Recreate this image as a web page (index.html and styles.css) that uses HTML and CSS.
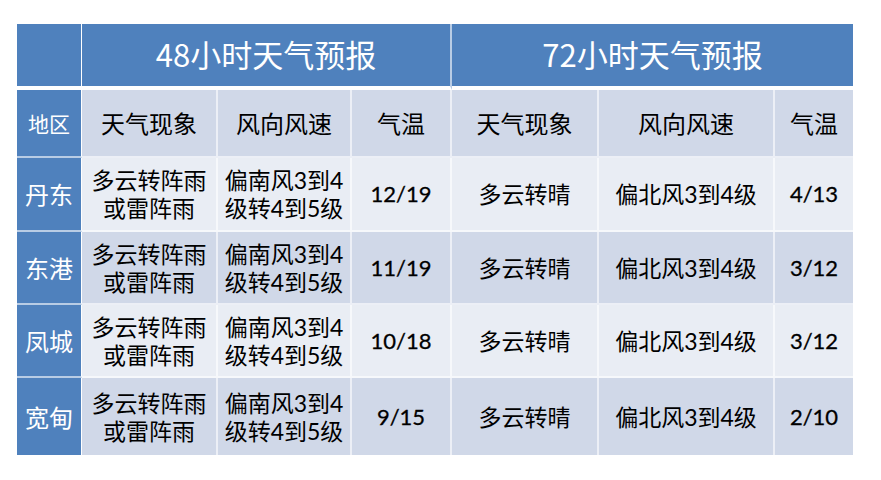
FILE: index.html
```html
<!DOCTYPE html>
<html lang="zh-CN">
<head>
<meta charset="utf-8">
<title>天气预报</title>
<link rel="stylesheet" href="styles.css">
</head>
<body>
<div class="page">
  <table class="forecast">
    <colgroup>
      <col class="c1"><col class="c2"><col class="c3"><col class="c4"><col class="c5"><col class="c6"><col class="c7">
    </colgroup>
    <thead>
      <tr class="top">
        <th class="corner"></th>
        <th class="span" colspan="3">48小时天气预报</th>
        <th class="span last" colspan="3">72小时天气预报</th>
      </tr>
      <tr class="sub">
        <th class="area">地区</th>
        <th>天气现象</th>
        <th>风向风速</th>
        <th>气温</th>
        <th>天气现象</th>
        <th>风向风速</th>
        <th class="last">气温</th>
      </tr>
    </thead>
    <tbody>
      <tr class="light">
        <th class="area">丹东</th>
        <td>多云转阵雨<br>或雷阵雨</td>
        <td>偏南风3到4<br>级转4到5级</td>
        <td class="num">12/19</td>
        <td>多云转晴</td>
        <td>偏北风3到4级</td>
        <td class="num last">4/13</td>
      </tr>
      <tr class="dark">
        <th class="area">东港</th>
        <td>多云转阵雨<br>或雷阵雨</td>
        <td>偏南风3到4<br>级转4到5级</td>
        <td class="num">11/19</td>
        <td>多云转晴</td>
        <td>偏北风3到4级</td>
        <td class="num last">3/12</td>
      </tr>
      <tr class="light">
        <th class="area">凤城</th>
        <td>多云转阵雨<br>或雷阵雨</td>
        <td>偏南风3到4<br>级转4到5级</td>
        <td class="num">10/18</td>
        <td>多云转晴</td>
        <td>偏北风3到4级</td>
        <td class="num last">3/12</td>
      </tr>
      <tr class="dark bottom">
        <th class="area">宽甸</th>
        <td>多云转阵雨<br>或雷阵雨</td>
        <td>偏南风3到4<br>级转4到5级</td>
        <td class="num">9/15</td>
        <td>多云转晴</td>
        <td>偏北风3到4级</td>
        <td class="num last">2/10</td>
      </tr>
    </tbody>
  </table>
</div>
</body>
</html>
```
FILE: styles.css
```css
html, body {
  margin: 0;
  padding: 0;
  background: #ffffff;
}

.page {
  padding: 24px 0 0 17px;
}

.forecast {
  border-collapse: separate;
  border-spacing: 0;
  table-layout: fixed;
  width: 836px;
  font-family: Lato, "Noto Sans CJK SC", sans-serif;
  color: #000000;
}

.c1 { width: 65px; }
.c2 { width: 136px; }
.c3 { width: 134px; }
.c4 { width: 100px; }
.c5 { width: 147px; }
.c6 { width: 176px; }
.c7 { width: 78px; }

.forecast th,
.forecast td {
  box-sizing: border-box;
  padding: 0;
  text-align: center;
  vertical-align: middle;
  font-weight: normal;
  border-right: 2px solid rgba(255, 255, 255, 0.6);
  border-bottom: 2px solid rgba(255, 255, 255, 0.6);
}

.forecast .last {
  border-right: none;
}

.forecast .bottom th,
.forecast .bottom td {
  border-bottom: none;
}

/* top header row */
.top th {
  background: #4f81bd;
  color: #ffffff;
  height: 66px;
  font-family: "Noto Sans CJK SC", sans-serif;
  font-size: 31px;
  line-height: 34px;
  border-bottom: 4px solid #ffffff;
  padding-bottom: 2px;
}

.forecast .top .corner,
.forecast .area {
  border-right: 1px solid #ffffff;
}

/* sub header */
.sub th {
  background: #d0d8e8;
  height: 68px;
  font-family: "Noto Sans CJK SC", sans-serif;
  font-size: 24px;
  line-height: 30px;
}

.forecast .area {
  background: #4f81bd;
  color: #ffffff;
  font-family: "Noto Sans CJK SC", sans-serif;
  font-size: 24px;
  line-height: 30px;
}

.sub .area {
  font-size: 21px;
}

tbody td {
  font-size: 23px;
  line-height: 28px;
}

tbody td.num {
  font-size: 22px;
  color: #000000;
  -webkit-text-stroke: 0.3px #000000;
}

.light td { background: #e9edf4; }
.dark td { background: #d0d8e8; }

tbody tr:nth-child(1) > * { height: 74px; }
tbody tr:nth-child(2) > * { height: 73px; }
tbody tr:nth-child(3) > * { height: 73px; }
tbody tr:nth-child(4) > * { height: 77px; }
```
